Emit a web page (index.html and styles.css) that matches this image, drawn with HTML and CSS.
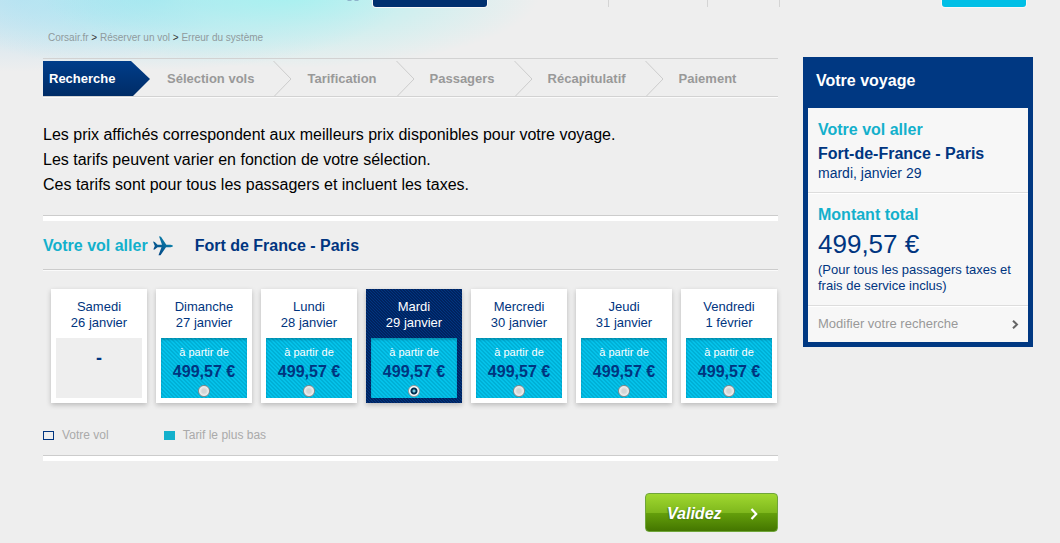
FILE: index.html
```html
<!DOCTYPE html>
<html lang="fr">
<head>
<meta charset="utf-8">
<title>Corsair.fr - Réserver un vol</title>
<link rel="stylesheet" href="styles.css">
</head>
<body>
<header class="topbar">
  <svg class="topbar-mark" width="12" height="2" viewBox="0 0 12 2"><path d="M0 0H5L4 1H1ZM7 0H12L11 1H8Z" fill="#8fb4cc"/></svg>
  <span class="tab tab-navy"></span>
  <span class="topbar-links"><i></i><i></i></span>
  <span class="tab tab-cyan"></span>
</header>
<div class="page">
  <main class="main">
    <nav class="breadcrumb" aria-label="Fil d'Ariane">
      <a href="#">Corsair.fr</a> &gt; <a href="#">Réserver un vol</a> &gt; <a href="#">Erreur du système</a>
    </nav>
    <ol class="steps">
      <li class="step step-current">Recherche</li>
      <li class="step">Sélection vols</li>
      <li class="arrow"><svg width="19" height="35" viewBox="0 0 19 35"><path d="M0.500 0L18 18L1.500 35"/></svg></li>
      <li class="step">Tarification</li>
      <li class="arrow"><svg width="19" height="35" viewBox="0 0 19 35"><path d="M0.500 0L18 18L1.500 35"/></svg></li>
      <li class="step">Passagers</li>
      <li class="arrow"><svg width="19" height="35" viewBox="0 0 19 35"><path d="M0.500 0L18 18L1.500 35"/></svg></li>
      <li class="step">Récapitulatif</li>
      <li class="arrow"><svg width="19" height="35" viewBox="0 0 19 35"><path d="M0.500 0L18 18L1.500 35"/></svg></li>
      <li class="step">Paiement</li>
    </ol>
    <p class="intro">Les prix affichés correspondent aux meilleurs prix disponibles pour votre voyage.<br>Les tarifs peuvent varier en fonction de votre sélection.<br>Ces tarifs sont pour tous les passagers et incluent les taxes.</p>
    <form>
      <h2 class="route">
        <span class="accent">Votre vol aller</span>
        <svg class="plane" width="20" height="20" viewBox="0 0 20 20"><defs><linearGradient id="pg" x1="0" y1="1" x2="1" y2="0"><stop offset="0" stop-color="#00377c"/><stop offset="1" stop-color="#1097b8"/></linearGradient></defs><path fill="url(#pg)" d="M0 5.500L1.800 6L4.500 8.700H9L6 0.300L8 0.700L13.300 8.700H17.500Q20 9 20 10Q20 11 17.500 11.200H13L7.500 19.300H5.500L8.500 11.200H4.500L1.700 13.600H0.300L1.800 10Z"/></svg>
        <span>Fort de France - Paris</span>
      </h2>
      <div class="days">
        <div class="day"><span class="date">Samedi<br>26 janvier</span><span class="fare fare-none">-</span></div>
        <label class="day"><span class="date">Dimanche<br>27 janvier</span><span class="fare"><small>à partir de</small><b>499,57 €</b><input type="radio" name="day"></span></label>
        <label class="day"><span class="date">Lundi<br>28 janvier</span><span class="fare"><small>à partir de</small><b>499,57 €</b><input type="radio" name="day"></span></label>
        <label class="day day-selected"><span class="date">Mardi<br>29 janvier</span><span class="fare"><small>à partir de</small><b>499,57 €</b><input type="radio" name="day" checked></span></label>
        <label class="day"><span class="date">Mercredi<br>30 janvier</span><span class="fare"><small>à partir de</small><b>499,57 €</b><input type="radio" name="day"></span></label>
        <label class="day"><span class="date">Jeudi<br>31 janvier</span><span class="fare"><small>à partir de</small><b>499,57 €</b><input type="radio" name="day"></span></label>
        <label class="day"><span class="date">Vendredi<br>1 février</span><span class="fare"><small>à partir de</small><b>499,57 €</b><input type="radio" name="day"></span></label>
      </div>
      <div class="legend">
        <span class="key"><i class="swatch"></i>Votre vol</span>
        <span class="key"><i class="swatch swatch-full"></i>Tarif le plus bas</span>
      </div>
      <div class="actions">
        <button class="submit" type="submit">Validez <svg width="8" height="12" viewBox="0 0 8 12"><path d="M1.500 1L6.200 6L1.500 11" fill="none" stroke="#fff" stroke-width="2.200"/></svg></button>
      </div>
    </form>
  </main>
  <aside class="trip">
    <h2 class="trip-title">Votre voyage</h2>
    <section class="trip-part">
      <h3>Votre vol aller</h3>
      <strong>Fort-de-France - Paris</strong>
      <p class="trip-date">mardi, janvier 29</p>
    </section>
    <section class="trip-part">
      <h3>Montant total</h3>
      <p class="total">499,57 €</p>
      <p class="note">(Pour tous les passagers taxes et frais de service inclus)</p>
    </section>
    <a class="modify" href="#">Modifier votre recherche <svg width="7" height="9" viewBox="0 0 7 9"><path d="M1 0.700L5 4.500L1 8.300" fill="none" stroke="#666" stroke-width="2"/></svg></a>
  </aside>
</div>
</body>
</html>
```
FILE: styles.css
```css
* { box-sizing: border-box; }

body {
  margin: 0;
  font-family: "Liberation Sans", Arial, sans-serif;
  color: #003580;
  background:
    radial-gradient(ellipse 250px 74px at 290px -6px, rgba(160, 242, 240, .85), rgba(180, 240, 240, .6) 45%, rgba(238, 238, 238, 0)) no-repeat,
    radial-gradient(ellipse 240px 74px at 160px -4px, rgba(140, 224, 240, .85), rgba(170, 230, 242, .55) 50%, rgba(238, 238, 238, 0)) no-repeat,
    radial-gradient(ellipse 200px 72px at 20px 0, rgba(190, 224, 242, .9), rgba(238, 238, 238, 0)) no-repeat,
    #eee;
}

h2, h3, p, ol { margin: 0; padding: 0; }
a { text-decoration: none; }

.topbar {
  display: flex;
  height: 7px;
  padding: 0 34px 0 347px;
}
.topbar-mark { flex: none; margin-right: 14px; }
.tab {
  flex: none;
  border-radius: 0 0 3px 3px;
  box-shadow: 0 0 0 1px #f8f8f8;
}
.tab-navy { width: 114px; background: #00306f; }
.tab-cyan { width: 84px; background: #00bfe6; }
.topbar-links {
  display: flex;
  flex: 1;
  margin: 0 162px 0 121px;
  border: solid #d4d4d4;
  border-width: 0 1px;
}
.topbar-links i:first-child {
  width: 99px;
  border-right: 1px solid #d4d4d4;
}

.page {
  display: flex;
  align-items: flex-start;
  gap: 25px;
  padding: 0 27px 11px 43px;
}
.main { flex: 1; min-width: 0; }

.breadcrumb {
  height: 51px;
  padding: 25px 5px 0;
  font-size: 10px;
  line-height: 12px;
  color: #333;
}
.breadcrumb a { color: #8f9a9d; }

.steps {
  display: flex;
  height: 39px;
  padding-top: 2px;
  border: solid #d2d2d2;
  border-width: 1px 0;
  box-shadow: 0 1px #fafafa;
  list-style: none;
  font-size: 13px;
  font-weight: bold;
  line-height: 35px;
  color: #999;
}
.step { padding: 0 19px 0 16px; }
.step-current {
  width: 107px;
  margin-right: 1px;
  padding: 0 0 0 6px;
  color: #fff;
  background: linear-gradient(#003d8a, #002c66);
  clip-path: polygon(0 0, 88px 0, 100% 18px, 90px 100%, 0 100%);
}
.arrow { width: 18px; }
.arrow svg { display: block; }
.arrow path { fill: none; stroke: #ccc; }

.intro {
  padding: 25px 0 18px;
  font-size: 16px;
  line-height: 25px;
  color: #000;
}

.route {
  display: flex;
  align-items: center;
  height: 55px;
  padding-top: 6px;
  border: solid #ccc;
  border-width: 1px 0;
  box-shadow: inset 0 5px #fff, 0 1px #fafafa;
  font-size: 16px;
}
.accent { color: #13b0cc; }
.plane { margin: 0 22px 0 5px; }

.days {
  display: grid;
  grid-template-columns: repeat(7, 1fr);
  gap: 9px;
  padding: 19px 1px 0 8px;
}
.day {
  padding: 10px 5px 5px;
  background: #fff;
  box-shadow: 0 2px 5px rgba(0, 0, 0, .22);
  text-align: center;
}
.day-selected {
  color: #fff;
  background: linear-gradient(45deg, #002360 25%, #003580 25% 50%, #002360 50% 75%, #003580 75%) 0 0 / 3px 3px;
}
.date {
  display: block;
  height: 39px;
  font-size: 13px;
  line-height: 16px;
}
.fare {
  display: flex;
  flex-direction: column;
  align-items: center;
  height: 60px;
  padding-top: 6px;
  color: #003580;
  background: linear-gradient(45deg, #00b0d6 25%, #04c2ea 25% 50%, #00b0d6 50% 75%, #04c2ea 75%) 0 0 / 4px 4px;
  box-shadow: inset 0 2px 2px rgba(0, 60, 80, .3);
}
.fare small { font-size: 11px; line-height: 16px; color: #fff; }
.fare b { font-size: 16px; line-height: 23px; }
.fare input {
  appearance: none;
  width: 12px;
  height: 12px;
  margin: 2px 0 0;
  border: 1px solid #888;
  border-radius: 50%;
  background: radial-gradient(circle, #d4d4d4 2px, #f4f4f4 5px);
}
.fare input:checked {
  border-color: #999;
  background: radial-gradient(circle, #7ac8df 0 1px, #003050 2px 3px, #fff 4px);
}
.fare-none {
  padding-top: 10px;
  font-size: 18px;
  font-weight: bold;
  line-height: 20px;
  background: #eee;
  box-shadow: none;
}

.legend {
  display: flex;
  gap: 55px;
  margin-top: 24px;
  padding-bottom: 11px;
  border-bottom: 1px solid #ccc;
  box-shadow: 0 5px #fff;
  font-size: 12px;
  line-height: 17px;
  color: #aaa;
}
.key { display: flex; align-items: center; gap: 8px; }
.swatch { width: 11px; height: 9px; border: 1px solid #003580; }
.swatch-full { border-color: #13b0cc; background: #13b0cc; }

.actions {
  display: flex;
  justify-content: flex-end;
  padding-top: 37px;
}
.submit {
  display: flex;
  align-items: center;
  justify-content: space-between;
  width: 133px;
  height: 39px;
  padding: 2px 19px 0 21px;
  border: 1px solid #6fa53a;
  border-radius: 4px;
  background: linear-gradient(#a0d830, #7fb81d 50%, #649f0b 52%, #447600);
  font: italic bold 16px "Liberation Sans", Arial, sans-serif;
  color: #fff;
  text-shadow: -1px 1px 1px #4d7d10;
}

.trip {
  flex: 0 0 230px;
  margin-top: 50px;
  border: 5px solid #003882;
  background: #f7f7f7;
}
.trip-title {
  padding: 5px 8px 13px;
  background: #003882;
  font-size: 16px;
  line-height: 28px;
  color: #fff;
}
.trip-part {
  padding: 10px 10px 11px;
  border-bottom: 1px solid #ddd;
  box-shadow: 0 1px #fff;
}
.trip-part h3 { font-size: 16px; line-height: 23px; color: #13b0cc; }
.trip-part strong { display: block; font-size: 16px; line-height: 25px; }
.trip-date { font-size: 14px; line-height: 15px; }
.total { font-size: 26px; line-height: 36px; }
.note { font-size: 13px; line-height: 16px; }
.modify {
  display: flex;
  align-items: center;
  justify-content: space-between;
  padding: 0 9px 0 10px;
  font-size: 13px;
  line-height: 36px;
  color: #999;
}
```
